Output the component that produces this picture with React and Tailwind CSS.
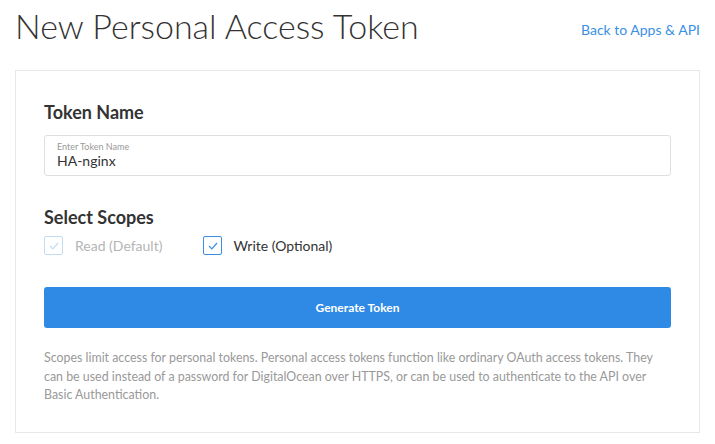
export default function App() {
  return (
    <div className="min-h-screen bg-white px-[15px] pt-[4px] font-['Lato','Open_Sans',sans-serif] text-[#333]">
      <div className="flex items-center justify-between">
        <h1 className="text-[34px] leading-[44px] font-light text-[#333]">New Personal Access Token</h1>
        <a href="#" className="mt-[6px] text-[14px] text-[#3b8fe3]">Back to Apps &amp; API</a>
      </div>

      <div className="mt-[22px] border border-[#e8e8e8] pl-[28px] pr-[28px] pt-[30px] pb-[27px]">
        <h2 className="text-[18px] leading-[22px] font-bold text-[#333]">Token Name</h2>
        <div className="mt-[12px] flex h-[41px] flex-col justify-center rounded-[3px] border border-[#dfdfdf] px-[12px]">
          <span className="text-[9px] leading-[11px] text-[#999]">Enter Token Name</span>
          <span className="text-[14px] leading-[18px] text-[#333]">HA-nginx</span>
        </div>

        <h2 className="mt-[30px] text-[18px] leading-[22px] font-bold text-[#333]">Select Scopes</h2>
        <div className="mt-[7px] flex items-center">
          <label className="flex items-center">
            <span className="flex h-[19px] w-[19px] items-center justify-center rounded-[2px] border border-[#c4dcf3]">
              <svg width="10" height="8" viewBox="0 0 10 8" fill="none">
                <path d="M1 4l2.8 2.8L9 1" stroke="#c4dcf3" strokeWidth="1.2" />
              </svg>
            </span>
            <span className="ml-[12px] text-[14px] text-[#b5b5b5]">Read (Default)</span>
          </label>
          <label className="ml-[41px] flex items-center">
            <span className="flex h-[19px] w-[19px] items-center justify-center rounded-[2px] border border-[#3b8fe3]">
              <svg width="10" height="8" viewBox="0 0 10 8" fill="none">
                <path d="M1 4l2.8 2.8L9 1" stroke="#3b8fe3" strokeWidth="1.2" />
              </svg>
            </span>
            <span className="ml-[11px] text-[14px] text-[#333]">Write (Optional)</span>
          </label>
        </div>

        <button className="mt-[31px] h-[41px] w-full rounded-[3px] bg-[#2f8ae6] text-[12px] font-bold text-white">
          Generate Token
        </button>

        <p className="mt-[21px] text-[12.4px] leading-[18.5px] text-[#999]">
          Scopes limit access for personal tokens. Personal access tokens function like ordinary OAuth access tokens. They can be used instead of a password for DigitalOcean over HTTPS, or can be used to authenticate to the API over Basic Authentication.
        </p>
      </div>
    </div>
  );
}
